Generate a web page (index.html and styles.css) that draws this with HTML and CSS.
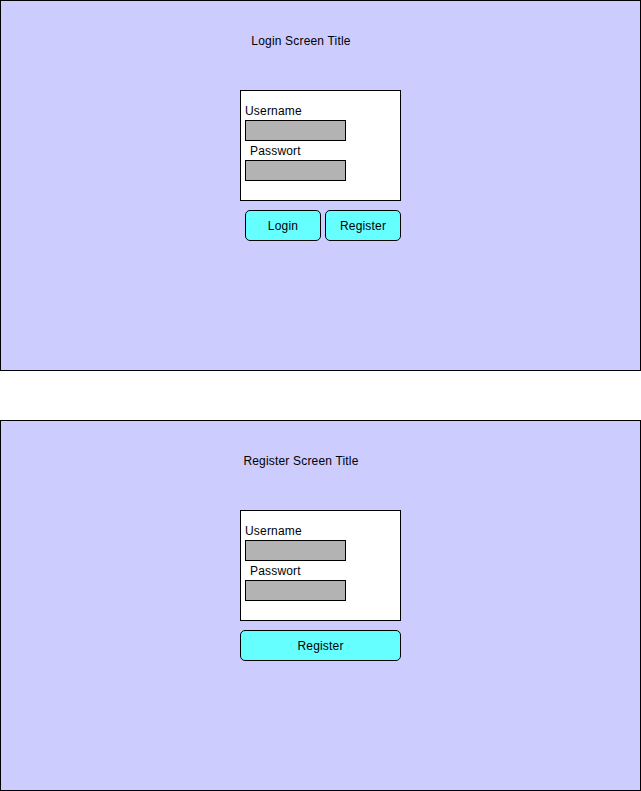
FILE: index.html
```html
<!DOCTYPE html>
<html>
<head>
<meta charset="utf-8">
<link rel="stylesheet" href="styles.css">
</head>
<body>
<section class="screen">
  <div class="title">Login Screen Title</div>
  <div class="form">
    <div class="label">Username</div>
    <div class="field"></div>
    <div class="label label-pw">Passwort</div>
    <div class="field"></div>
  </div>
  <div class="actions">
    <div class="btn btn-small">Login</div>
    <div class="btn btn-small">Register</div>
  </div>
</section>
<section class="screen screen-second">
  <div class="title">Register Screen Title</div>
  <div class="form">
    <div class="label">Username</div>
    <div class="field"></div>
    <div class="label label-pw">Passwort</div>
    <div class="field"></div>
  </div>
  <div class="actions actions-wide">
    <div class="btn btn-wide">Register</div>
  </div>
</section>
</body>
</html>
```
FILE: styles.css
```css
html, body {
  margin: 0;
  padding: 0;
  background: #ffffff;
}
body {
  font-family: "Liberation Sans", Arial, Helvetica, sans-serif;
  font-size: 12px;
  line-height: 14px;
  letter-spacing: 0.18px;
  color: #000000;
}
.screen {
  box-sizing: border-box;
  width: 641px;
  height: 371px;
  border: 1px solid #000000;
  background: #ccccff;
  padding: 33px 0 0 239px;
}
.screen-second {
  margin-top: 49px;
}
.title {
  width: 122px;
  text-align: center;
  height: 14px;
}
.form {
  box-sizing: border-box;
  margin-top: 42px;
  width: 161px;
  height: 111px;
  border: 1px solid #000000;
  background: #ffffff;
  padding: 13px 0 0 4px;
}
.label {
  height: 14px;
}
.label-pw {
  margin-left: 5px;
  margin-top: 3px;
}
.field {
  box-sizing: border-box;
  margin-top: 2px;
  width: 101px;
  height: 21px;
  border: 1px solid #000000;
  background: #b3b3b3;
}
.actions {
  display: flex;
  gap: 4px;
  margin-top: 9px;
  padding-left: 5px;
}
.actions-wide {
  padding-left: 0;
}
.btn {
  box-sizing: border-box;
  height: 31px;
  border: 1px solid #000000;
  border-radius: 5px;
  background: #66ffff;
  display: flex;
  align-items: center;
  justify-content: center;
}
.btn-small {
  width: 76px;
}
.btn-wide {
  width: 161px;
}
```
